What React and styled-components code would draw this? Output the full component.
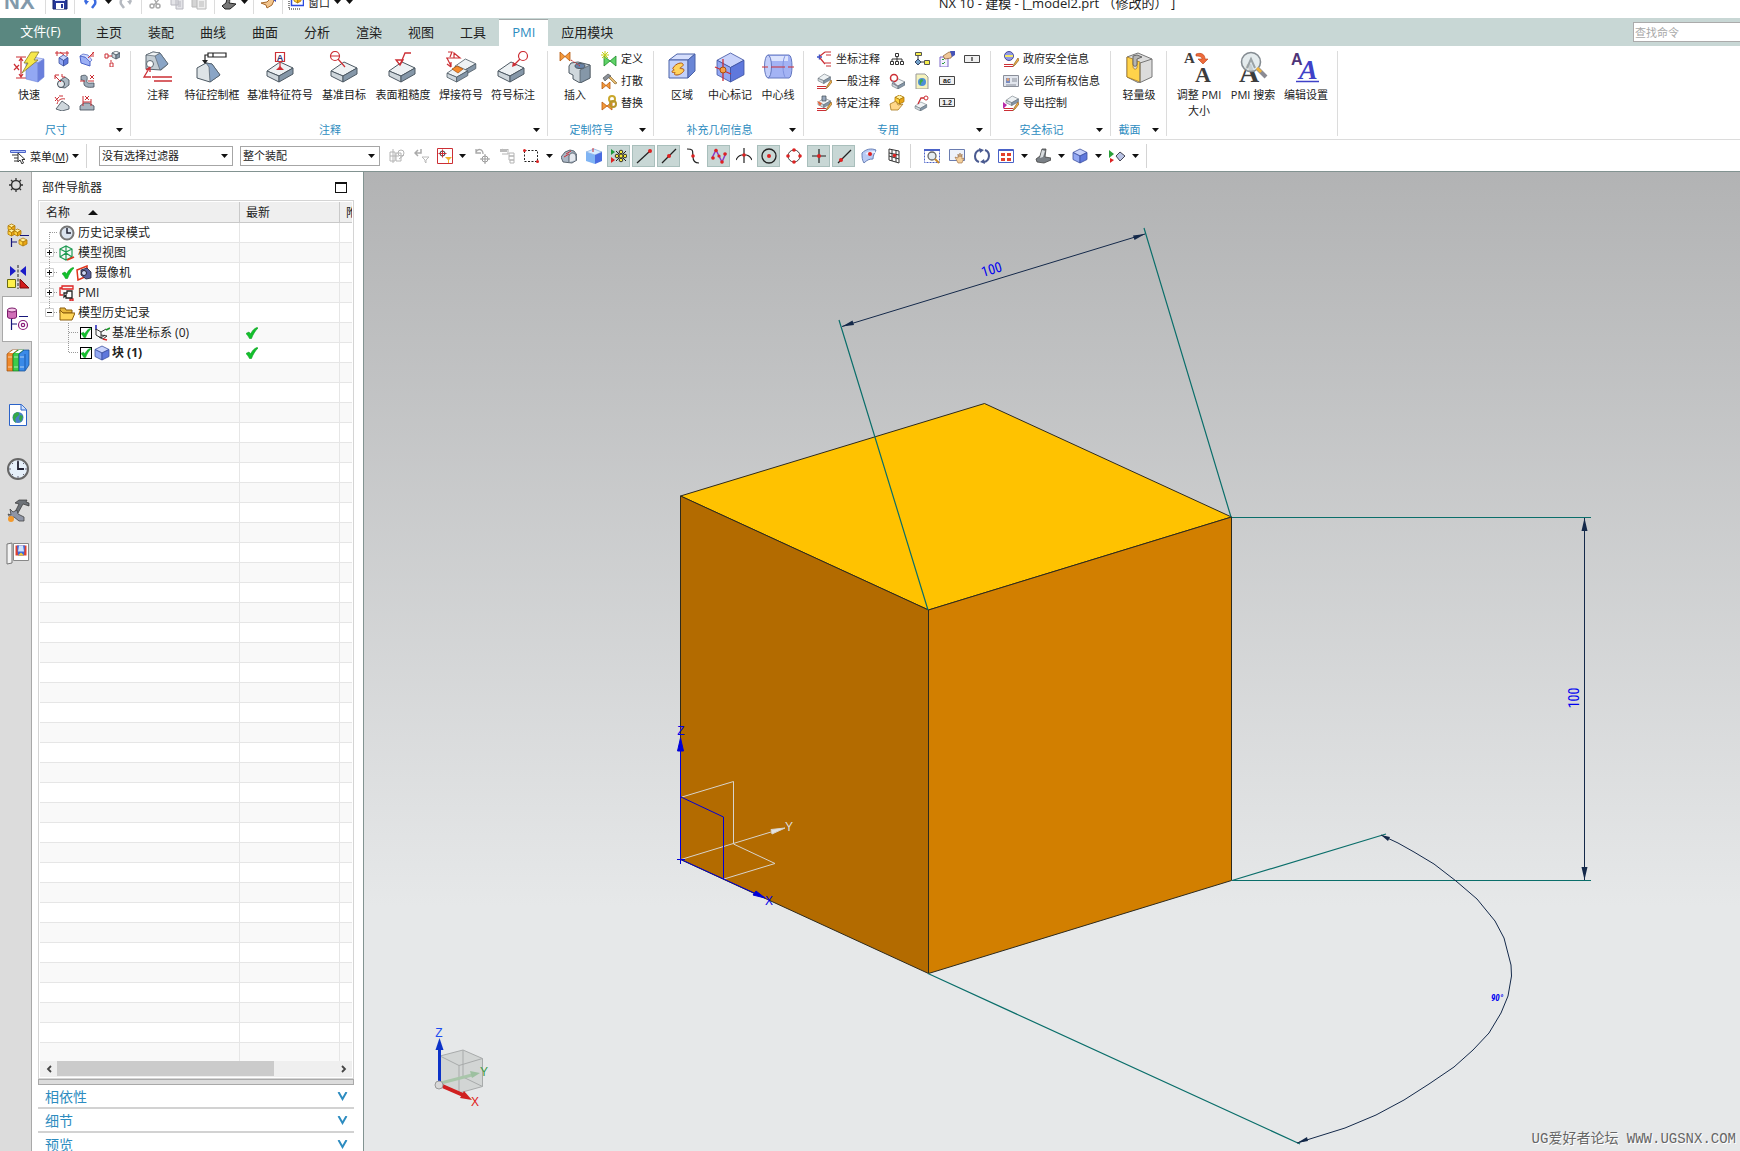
import React, { useState } from "react";
import styled, { createGlobalStyle } from "styled-components";

const GlobalStyle = createGlobalStyle`
  * {
    box-sizing: border-box;
  }
  body {
    margin: 0;
    overflow: hidden;
    background: #fff;
    color: #222;
    font-family: "Open Sans", "Noto Sans CJK SC", sans-serif;
    font-size: 11px;
  }
  button, select, input {
    font: inherit;
    color: inherit;
    margin: 0;
  }
  button {
    border: none;
    padding: 0;
    background: none;
    cursor: pointer;
  }
  svg {
    display: block;
    flex: none;
  }
`;

const Page = styled.div`
  display: flex;
  flex-direction: column;
  height: 100vh;
`;

/* ---------- title bar ---------- */

const TitleBar = styled.header`
  display: flex;
  align-items: flex-end;
  height: 18px;
  overflow: hidden;
`;

const QuickAccess = styled.div`
  display: flex;
  align-items: center;
  flex: none;
  width: 374px;
  height: 32px;
`;

const Logo = styled.b`
  width: 41px;
  padding-left: 4px;
  color: #8299ab;
  font: bold 22px "Liberation Sans", sans-serif;
`;

const QuickButton = styled.button`
  display: flex;
  align-items: center;
  justify-content: center;
  gap: 4px;
  width: ${(p) => p.$w || 22}px;
  height: 24px;
  white-space: nowrap;
`;

const QuickSep = styled.span`
  width: 1px;
  height: 24px;
  margin: 0 4px;
  background: #dcdcdc;
`;

const WindowTitle = styled.h1`
  flex: 1;
  margin: 0;
  text-align: center;
  font-size: 13px;
  font-weight: 400;
  line-height: 30px;
  white-space: pre;
`;

/* ---------- tabs ---------- */

const TabBar = styled.nav`
  display: flex;
  flex: none;
  height: 28px;
  background: #c8d7d5;
  font-size: 13px;
`;

const FileTab = styled.button`
  width: 81px;
  margin-right: 2px;
  padding-bottom: 3px;
  background: #5a8780;
  color: #fff;
`;

const Tab = styled.button`
  padding: 0 13px 3px;
  margin-top: 1px;
  border-top: 1px solid ${(p) => (p.$on ? "#a3a9a9" : "transparent")};
  background: ${(p) => (p.$on ? "#fff" : "transparent")};
  color: ${(p) => (p.$on ? "#2d8cc0" : "#222")};
`;

const Search = styled.input`
  width: 107px;
  height: 20px;
  margin: 4px 0 0 auto;
  padding: 0 1px;
  border: 1px solid #ababab;
  border-right: none;
  border-radius: 0;
  background: #fff;
  font-size: 11px;
  &::placeholder {
    color: #a8a8a8;
  }
`;

/* ---------- ribbon ---------- */

const Ribbon = styled.div`
  display: grid;
  flex: none;
  grid-template-columns: 131px 417px 106px 150px 187px 120px 56px 171px;
  height: 94px;
  padding: 5px 0 3px;
  border-bottom: 1px solid #dcdcdc;
`;

const GroupBox = styled.section`
  display: flex;
  flex-direction: column;
  border-right: 1px solid #dcdcdc;
`;

const GroupBody = styled.div`
  display: flex;
  flex: 1;
  align-items: flex-start;
  padding-left: ${(p) => p.$pad}px;
`;

const GroupFoot = styled.div`
  display: flex;
  height: 12px;
  line-height: 12px;
  color: #2d8cc0;
`;

const GroupName = styled.span`
  flex: 1;
  text-align: center;
`;

const GroupMore = styled.button`
  width: 18px;
  padding-left: 4px;
`;

const BigButton = styled.button`
  display: flex;
  flex-direction: column;
  align-items: center;
  gap: 4px;
  width: ${(p) => p.$w}px;
  line-height: 16px;
  white-space: nowrap;
`;

const IconGrid = styled.div`
  display: grid;
  grid-template-rows: repeat(3, 16px);
  grid-auto-flow: column;
  grid-auto-columns: 25px;
  row-gap: 6px;
  margin-left: ${(p) => p.$gap || 0}px;
`;

const TextGrid = styled(IconGrid)`
  grid-auto-columns: auto;
`;

const IconButton = styled.button`
  display: flex;
  align-items: center;
  justify-content: center;
`;

const TextButton = styled.button`
  display: flex;
  align-items: center;
  gap: 4px;
  line-height: 16px;
  white-space: nowrap;
`;

/* ---------- selection bar ---------- */

const SelectionBar = styled.div`
  display: flex;
  flex: none;
  align-items: center;
  height: 32px;
  border-bottom: 1px solid #829391;
`;

const MenuButton = styled.button`
  display: flex;
  align-items: center;
  gap: 4px;
  width: 86px;
  padding-left: 10px;
  white-space: nowrap;
`;

const BarSep = styled.span`
  width: 1px;
  height: 24px;
  margin-right: ${(p) => p.$after}px;
  margin-left: ${(p) => p.$before || 0}px;
  background: #d4d4d4;
`;

const SelectWrap = styled.label`
  display: grid;
  align-items: center;
  width: ${(p) => p.$w}px;
  margin-right: ${(p) => p.$gap}px;
  select,
  svg {
    grid-area: 1 / 1;
  }
  select {
    appearance: none;
    height: 20px;
    padding: 0 2px;
    border: 1px solid #a6a6a6;
    border-radius: 0;
    background: #fff;
  }
  svg {
    justify-self: end;
    margin-right: 5px;
    pointer-events: none;
  }
`;

const Tool = styled.button`
  display: flex;
  align-items: center;
  justify-content: center;
  width: ${(p) => (p.$on ? 23 : p.$w || 25)}px;
  height: 22px;
  margin: 0 ${(p) => (p.$on ? 1 : 0)}px;
  border: ${(p) => (p.$on ? "1px solid #a9bfbc" : "none")};
  background: ${(p) => (p.$on ? "#c8d7d5" : "none")};
`;

/* ---------- body ---------- */

const Body = styled.main`
  display: flex;
  flex: 1;
  min-height: 0;
`;

const Rail = styled.nav`
  display: flex;
  flex: none;
  flex-direction: column;
  width: 32px;
  border-right: 1px solid #a9a9a9;
  background: #dcdcdc;
`;

const RailButton = styled.button`
  display: flex;
  align-items: center;
  justify-content: center;
  height: 42px;
  margin-top: ${(p) => p.$gap || 0}px;
  padding-left: 4px;
`;

const RailOptions = styled(RailButton)`
  height: 26px;
  padding-left: 0;
`;

const RailActive = styled(RailButton)`
  width: 30px;
  height: 46px;
  margin: -2px -1px -2px 2px;
  padding-left: 1px;
  border: 1px solid #a9a9a9;
  border-right: none;
  background: #fff;
`;

const Panel = styled.aside`
  display: flex;
  flex: none;
  flex-direction: column;
  width: 332px;
  padding: 0 9px 0 6px;
  border-right: 1px solid #829391;
`;

const PanelHead = styled.div`
  display: flex;
  align-items: center;
  justify-content: space-between;
  height: 28px;
  padding: 2px 7px 0 4px;
`;

const PanelTitle = styled.h2`
  margin: 0;
  font-size: 12px;
  font-weight: 400;
`;

const MaxButton = styled.button`
  width: 12px;
  height: 11px;
  border: 1px solid #111;
  border-top-width: 2px;
`;

const TreeBox = styled.div`
  display: flex;
  flex: 1;
  flex-direction: column;
  min-height: 0;
  padding: 1px;
  border: 1px solid #d4d4d4;
`;

const TreeScroll = styled.div`
  flex: 1;
  min-height: 0;
  overflow: hidden;
`;

const TreeTable = styled.table`
  width: 100%;
  table-layout: fixed;
  border-collapse: separate;
  border-spacing: 0;
  font-size: 12px;
  th,
  td {
    overflow: hidden;
    padding: 0;
    white-space: nowrap;
    border-right: 1px solid #e6e6e6;
  }
  th {
    height: 21px;
    padding: 0 6px;
    border-bottom: 1px solid #c9c9c9;
    border-right-color: #c9c9c9;
    background: #efefef;
    font-weight: 400;
    text-align: left;
  }
  td {
    height: 20px;
    border-bottom: 1px solid #e6e6e6;
  }
  tr > :last-child {
    border-right: none;
    text-overflow: clip;
  }
  tbody tr:nth-child(even) {
    background: #f9f9f9;
  }
`;

const SortHead = styled.span`
  display: flex;
  align-items: center;
  gap: 18px;
`;

const Node = styled.div`
  display: flex;
  align-items: center;
  height: 19px;
  padding-left: ${(p) => (p.$level ? 22 : 3)}px;
  font-weight: ${(p) => (p.$bold ? 700 : 400)};
  line-height: 18px;
`;

const NodeText = styled.span`
  padding-left: 3px;
`;

const Ticked = styled.span`
  padding: 0 2px 0 3px;
`;

const NodeLabel = styled.label`
  display: flex;
  align-items: center;
  gap: 2px;
`;

const CheckBox = styled.span`
  display: grid;
  place-items: center;
  input,
  svg {
    grid-area: 1 / 1;
  }
  input {
    appearance: none;
    width: 12px;
    height: 12px;
    border: 1px solid #000;
    background: #fff;
  }
  svg {
    pointer-events: none;
  }
`;

const StateCell = styled.td`
  svg {
    margin-left: 6px;
  }
`;

const ScrollBar = styled.div`
  display: flex;
  height: 16px;
  background: #efefef;
`;

const ScrollArrow = styled.button`
  display: flex;
  align-items: center;
  justify-content: center;
  width: 17px;
`;

const ScrollTrack = styled.div`
  flex: 1;
`;

const ScrollThumb = styled.div`
  width: 78%;
  height: 15px;
  background: #cbcbcb;
`;

const Splitter = styled.div`
  height: 6px;
  border: 1px solid #a9a9a9;
  background: #dcdcdc;
`;

const Sections = styled.div`
  height: 66px;
  overflow: hidden;
`;

const Section = styled.button`
  display: flex;
  align-items: center;
  justify-content: space-between;
  width: 100%;
  height: 24px;
  padding: 1px 6px 0 7px;
  border-bottom: 2px solid #d2d2d2;
  color: #2d8cc0;
  font-size: 14px;
  line-height: 20px;
`;

const Viewport = styled.section`
  position: relative;
  flex: 1;
  min-width: 0;
  background: linear-gradient(#b2b3b4, #e6e8e9 75%);
  > svg {
    width: 100%;
    height: 100%;
  }
`;

const Watermark = styled.span`
  position: absolute;
  right: 4px;
  bottom: 3px;
  color: #666;
  font: 14px/18px "Liberation Mono", "Noto Sans CJK SC", monospace;
  text-shadow: 1px 1px 0 #fff;
`;

/* ---------- drawing helpers ---------- */

const RED = "#cc2f35";
const INK = "#3f4a55";

const Svg = ({ s = 16, children }) => (
  <svg width={s} height={s} viewBox={`0 0 ${s} ${s}`} fill="none" aria-hidden="true">
    {children}
  </svg>
);

const Caret = () => (
  <svg width="7" height="4" viewBox="0 0 7 4" aria-hidden="true">
    <path d="M0 0h7L3.5 4z" fill="#111" />
  </svg>
);

const palettes = {
  grey: ["#eef2f4", "#cfd7dc", "#8597a8", "#4d5963"],
  blue: ["#c9d3fb", "#93a8f3", "#5f78dc", "#3c50a0"],
  gold: ["#fff0a0", "#ffd23c", "#e8a414", "#b07a08"],
};

const Cube = ({ x = 0, y = 0, w = 14, h = 15, c = "grey" }) => {
  const [top, left, right, line] = palettes[c];
  const m = x + w / 2;
  const d = h / 4;
  return (
    <g stroke={line} strokeWidth=".8" strokeLinejoin="round">
      <path d={`M${x} ${y + d}L${m} ${y}L${x + w} ${y + d}L${m} ${y + 2 * d}z`} fill={top} />
      <path d={`M${x} ${y + d}L${m} ${y + 2 * d}V${y + h}L${x} ${y + h - d}z`} fill={left} />
      <path d={`M${m} ${y + 2 * d}L${x + w} ${y + d}V${y + h - d}L${m} ${y + h}z`} fill={right} />
    </g>
  );
};

const Slab = ({ x = 0, y = 0, k = 1, c = "grey" }) => {
  const [top, left, right, line] = palettes[c];
  return (
    <g transform={`translate(${x} ${y}) scale(${k})`} stroke={line} strokeLinejoin="round">
      <path d="M0 9L13 0L26 6L12 14z" fill={top} />
      <path d="M0 9L12 14V20L0 14z" fill={left} />
      <path d="M12 14L26 6V12L12 20z" fill={right} />
    </g>
  );
};

const Pencil = () => (
  <g>
    <path d="M1 13.5h9M1 15.5h9" stroke={RED} />
    <path d="M15 7l-4 6-1 2.500 2-1.500 4-5z" fill="#f4b64a" stroke="#8a5a1c" strokeWidth=".7" />
  </g>
);

const Bowtie = ({ x = 0, y = 0, w = 10, h = 9, c = "#f59a3a", s = "#b55a12" }) => (
  <path
    d={`M${x} ${y}L${x + w} ${y + h}V${y}L${x} ${y + h}z`}
    fill={c}
    stroke={s}
    strokeWidth=".8"
    strokeLinejoin="round"
  />
);

const Check = ({ s = 12 }) => (
  <svg width={s} height={s} viewBox="0 0 12 12" aria-hidden="true">
    <path d="M0 6.500L3 5l1.500 2C6 4 8 1.500 11 .5L12 1C9 4 7 7.500 5.500 11.500H3.500C2.500 9.500 1.500 8 0 6.500z" fill="#12c22c" stroke="#0a9a1e" strokeWidth=".6" />
  </svg>
);

/* ---------- ribbon icons ---------- */

const icons = {
  quick: (
    <Svg s={32}>
      <path d="M3 6h10M3 27h10M8 7v19M6 10l2-3 2 3M6 23l2 3 2-3M1 13l5 6M1 19l5-5" stroke={RED} strokeWidth="1.200" />
      <path d="M13 10l7-4 11 2-6 4z" fill="#cdd7fb" stroke="#6f84d8" strokeWidth=".6" />
      <path d="M13 10l12 2v19l-12-3z" fill="#93a8f3" stroke="#6f84d8" strokeWidth=".6" />
      <path d="M25 12l6-4v18l-6 5z" fill="#6a7fdc" stroke="#6f84d8" strokeWidth=".6" />
      <path d="M18 1h8l-5 8h4L9 22l6-10h-4z" fill="#f6e84a" stroke="#8a7c2c" strokeWidth=".8" />
    </Svg>
  ),
  note: (
    <Svg s={32}>
      <path d="M4 4l7-3 7 1 8 11-7 6-15-1z" fill="#c5ced4" stroke="#5a6670" />
      <path d="M13 5l5-3 8 11-8 6z" fill="#8aa5c6" stroke="#5a6670" strokeWidth=".7" />
      <path d="M4 4l7-3 7 1-5 3z" fill="#eef2f4" stroke="#5a6670" strokeWidth=".7" />
      <circle cx="8" cy="13" r="3.500" fill="#fff" stroke="#5a6670" />
      <path d="M8 16L2 26h7M8 16l-4 3M8 16v5M10 26h20M12 30h18" stroke={RED} strokeWidth="1.300" />
    </Svg>
  ),
  frame: (
    <Svg s={32}>
      <path d="M1 17l9-5 6 1 8 11-10 7-13-4z" fill="#dde3e6" stroke="#4d5963" />
      <path d="M10 12l6 1 8 11-10 7-1-15z" fill="#8aa5c6" stroke="#4d5963" strokeWidth=".7" />
      <path d="M9 12V4h3M12 2h18v4H12zM17 2v4" stroke="#222" strokeWidth="1.200" />
      <path d="M6 9h6l-3 4z" fill="#222" />
    </Svg>
  ),
  datum: (
    <Svg s={32}>
      <Slab x={3} y={11} />
      <path d="M11.500 1.500h9v9h-9zM16 11v5" stroke={RED} strokeWidth="1.200" fill="#fff" />
      <path d="M12 19l4-4 4 4z" fill={RED} />
      <text x="16" y="9.500" fontSize="9" fontWeight="700" textAnchor="middle" fill="#34346e" fontFamily="Liberation Sans">A</text>
    </Svg>
  ),
  target: (
    <Svg s={32}>
      <Slab x={3} y={11} />
      <circle cx="7" cy="5" r="4.500" stroke={RED} strokeWidth="1.200" fill="#fff" />
      <path d="M2.500 5h9M10 8l7 8" stroke={RED} strokeWidth="1.200" />
    </Svg>
  ),
  rough: (
    <Svg s={32}>
      <Slab x={2} y={11} />
      <path d="M9 9h7l-3 5zM13 14l5-12h6" stroke={RED} strokeWidth="1.300" />
    </Svg>
  ),
  weld: (
    <Svg s={32}>
      <Slab x={10} y={8} k={0.8} />
      <Slab x={2} y={15} k={0.8} />
      <path d="M7 18l5-3 6 3-5 4z" fill="#f58a2c" stroke="#a8520c" strokeWidth=".7" />
      <path d="M1 7h14L9 2v5M3 1h4L5 6M2 7l4 8M6 16v-5M6 16l-4-3" stroke={RED} strokeWidth="1.200" />
    </Svg>
  ),
  balloon: (
    <Svg s={32}>
      <Slab x={1} y={11} />
      <circle cx="26" cy="5" r="4.500" stroke={RED} strokeWidth="1.200" />
      <path d="M23 8l-6 6" stroke={RED} strokeWidth="1.200" />
      <path d="M15 16l1-5 4 3z" fill={RED} />
    </Svg>
  ),
  insert: (
    <Svg s={32}>
      <Bowtie x={1} y={1} />
      <path d="M12 12l-2 3v7l4 2v4l7 4 10-5V14l-12-3z" fill="#cfd7dc" stroke="#4d5963" />
      <path d="M21 19l10-5v13l-10 5z" fill="#8597a8" stroke="#4d5963" strokeWidth=".7" />
      <ellipse cx="21" cy="15" rx="5" ry="2.500" fill="#6883a8" stroke="#4d5963" />
      <path d="M12 9l9 6" stroke={RED} strokeDasharray="2 1" />
    </Svg>
  ),
  region: (
    <Svg s={32}>
      <path d="M3 9l8-6h18l-7 6z" fill="#d5defc" stroke="#4a62a8" />
      <path d="M3 9h19v18H3z" fill="#c3d1fa" stroke="#4a62a8" />
      <path d="M22 9l7-6v17l-7 7z" fill="#6a86d6" stroke="#4a62a8" />
      <path d="M7 17c3-5 9-6 10-4s-2 3-3 4 4 0 4 2-4 5-7 5-3-1-2-2-3 0-3-1 1-2 2-2-2-1-1-2z" fill="#ffd35c" stroke="#b0560f" />
    </Svg>
  ),
  centermark: (
    <Svg s={32}>
      <Cube x={3} y={2} w={27} h={29} c="blue" />
      <path d="M9 8v22M1 16l16 7" stroke={RED} strokeWidth="1.300" />
      <circle cx="9" cy="19" r="3" fill="#f5a04a" stroke="#a8520c" />
    </Svg>
  ),
  centerline: (
    <Svg s={32}>
      <path d="M6 4h21c4 0 4 23 0 23H6z" fill="#a3b3f4" stroke="#6478c0" />
      <path d="M8 5h18v5H8z" fill="#dbe3fd" />
      <ellipse cx="6" cy="15.500" rx="3.500" ry="11.500" fill="#c3cefa" stroke="#6478c0" />
      <path d="M24 4c-4 2-4 21 0 23" stroke="#7f92e0" />
      <path d="M0 16h6M9 16h14M26 16h6" stroke={RED} strokeWidth="1.200" />
    </Svg>
  ),
  light: (
    <Svg s={32}>
      <path d="M4 6l11-4 14 6v18l-13 6-12-6z" fill="#dcdcdc" stroke="#777" />
      <path d="M4 6l6 2v7c0 4 4 4 4 1v-6l3 1v20L4 26z" fill="#ffd34a" stroke="#a8791c" strokeWidth=".8" />
      <path d="M10 5v8c0 3 4 3 4 0V8l5-2-5-2z" fill="#b5b5b5" stroke="#666" />
      <path d="M17 12l12-4M17 12v20" stroke="#777" />
    </Svg>
  ),
  resize: (
    <Svg s={32}>
      <g fontFamily="Liberation Serif" fontWeight="700" fill="#3c3c3c">
        <text x="1" y="12" fontSize="15">A</text>
        <text x="12" y="31" fontSize="22">A</text>
      </g>
      <path d="M13 3c6-2 9 1 9 5h3l-5 5-5-5h4c0-2-2-3-6-3z" fill="#ee6b3a" stroke="#b8401a" strokeWidth=".6" />
    </Svg>
  ),
  search: (
    <Svg s={32}>
      <text x="2" y="31" fontSize="28" fontWeight="700" fill="#3c3c3c" fontFamily="Liberation Serif">A</text>
      <circle cx="14" cy="11" r="9.500" fill="#dfe7ea" fillOpacity=".85" stroke="#858c92" strokeWidth="1.600" />
      <path d="M10 17l4-9 4 9" stroke="#9aa2a6" strokeWidth="2" />
      <path d="M21 18l8 8" stroke="#8b8b93" strokeWidth="4" />
      <path d="M20 17l4 4" stroke="#f0b43c" strokeWidth="3" />
    </Svg>
  ),
  settings: (
    <Svg s={32}>
      <text x="1" y="14" fontSize="16" fontWeight="700" fill="#4e3478" fontFamily="Liberation Sans">A</text>
      <text x="9" y="28" fontSize="28" fontWeight="700" fontStyle="italic" fill="#3f42c8" fontFamily="Liberation Serif">A</text>
      <path d="M6 30.500h23" stroke="#3f42c8" strokeWidth="1.500" />
    </Svg>
  ),

  // 16px ribbon icons
  dimLinear: <Svg><Cube x={5} y={4} w={9} h={11} c="blue" /><path d="M1 2h14M3 0v5M13 0v5M6 1l4 3" stroke={RED} /></Svg>,
  dimRadial: <Svg><path d="M5 8l6-4 4 3v5l-4 3-6-1z" fill="#aebac4" stroke={INK} strokeWidth=".8" /><circle cx="7" cy="11" r="3.500" fill="#e5eaed" stroke={INK} /><path d="M1 3l6 6M1 6V2h4M8 1v3h3" stroke={RED} /></Svg>,
  dimAngle: <Svg><path d="M2 14l6-8 7 5v3l-7 2z" fill="#cfd7dc" stroke={INK} strokeWidth=".8" /><path d="M1 2l3 4M1 6l4-4M5 1h4M3 9c1-4 4-6 8-5" stroke={RED} /></Svg>,
  dimChamfer: <Svg><path d="M1 5l5 1 5 5v4l-9-3z" fill="#9cb0f5" stroke="#4a62c8" /><path d="M1 5l3-2 5 1 4 5-2 2-5-5z" fill="#d0dafc" stroke="#4a62c8" strokeWidth=".7" /><path d="M9 7l6-6M11 5h4M14 1v3" stroke={RED} /></Svg>,
  dimThick: <Svg><path d="M2 3c5-2 7 0 6 4s2 3 7 3v4c-6 1-11 0-10-5 0-2-1-2-3-2z" fill="#9fadba" stroke={INK} strokeWidth=".8" /><path d="M1 8h5M9 8h6M11 2l4 4M15 2l-4 4" stroke={RED} /></Svg>,
  dimArc: <Svg><path d="M1 11l4-3h5l5 3v4H1z" fill="#a9b5bf" stroke={INK} strokeWidth=".8" /><path d="M4 1v10M12 4v7M4 7h8M6 1l4 4M10 1L6 5" stroke={RED} /></Svg>,
  dimOrd: <Svg><Cube x={8} y={0} w={8} h={8} /><path d="M1 3h3v4H1zM4 5h4M7 9v2M6 12h3v4H6z" stroke={RED} /></Svg>,
  define: <Svg><Bowtie x={3} y={5} w={12} h={10} c="#5fd267" s="#1c8a28" /><path d="M4 0v8M0 4h8M1 1l6 6M7 1L1 7" stroke="#c3cf1a" /></Svg>,
  explode: <Svg><Bowtie x={1} y={9} w={8} h={7} /><path d="M7 4l2-1 7 7-2 1z" fill="#e6bb72" stroke="#8a6a2c" strokeWidth=".7" /><path d="M2 5l5-4 3 2-4 3-2 2z" fill="#8a9098" stroke="#555" strokeWidth=".7" /></Svg>,
  replace: <Svg><Bowtie x={1} y={7} w={10} h={8} /><circle cx="11" cy="4" r="3" stroke="#c9a72c" strokeWidth="2" /><circle cx="12" cy="9" r="3" stroke="#b8952a" strokeWidth="2" /></Svg>,
  coordNote: <Svg><path d="M1 6h5M3.500 3.500v5" stroke="#3a50c8" strokeWidth="1.500" /><path d="M4 5l5-4M4 7l5 6M9 1h6M10 4h5M9 12h6M10 15h5" stroke={RED} strokeWidth="1.200" /></Svg>,
  generalNote: <Svg><Slab x={2} y={1} k={0.48} /><Pencil /></Svg>,
  specificNote: <Svg><Slab x={2} y={3} k={0.48} /><path d="M6 1h4v5H6z" fill="#9aa9bd" stroke={INK} strokeWidth=".7" /><path d="M1 6l5 2-2 3z" fill="#e9663a" /><Pencil /></Svg>,
  treeSmall: <Svg><path d="M6.500 2.500h3v3h-3zM1.500 10.500h3v3h-3zM6.500 10.500h3v3h-3zM11.500 10.500h3v3h-3zM8 6v4M3 10V8h10v2" stroke="#333" /></Svg>,
  dummy1: <Svg><Slab x={3} y={6} k={0.5} /><circle cx="5" cy="5" r="3.500" stroke={RED} strokeWidth="1.500" /><path d="M3 8l5 5" stroke="#889" strokeWidth="1.500" /></Svg>,
  goldBox: <Svg><Cube x={6} y={0} w={9} h={9} c="gold" /><path d="M1 9l6-3 2 4 5-1-5 6H2z" fill="#ffd78a" stroke="#a8791c" strokeWidth=".8" /></Svg>,
  flow: <Svg><path d="M4 5v6M4 11h6" stroke="#333" /><path d="M1.500 1.500h6v3h-6z" fill="#f6ee4a" stroke="#555" /><path d="M4 8l3 3-3 3-3-3z" fill="#72a0c8" stroke="#346" /><path d="M10.500 9.500h5v4h-5z" fill="#f6ee4a" stroke="#555" /></Svg>,
  pageGlobe: <Svg><path d="M2 1h9l3 3v12H2z" fill="#f4f2bd" stroke="#999" /><circle cx="8" cy="9" r="4" fill="#4e8ed8" /><path d="M6 7c3-3 4 1 2 2s0 3-1 3-2-3-1-5z" fill="#3faa4a" /></Svg>,
  slabNote: <Svg><Slab x={1} y={7} k={0.45} /><circle cx="12" cy="3" r="2" stroke={RED} /><path d="M10 3H7L4 9" stroke={RED} strokeWidth="1.300" /></Svg>,
  handList: <Svg><path d="M1 6h8v10H1z" fill="#f4f0ff" stroke="#7c68c8" /><path d="M3 8l1 1 2-2M3 12l1 1 2-2" stroke="#2a9a3a" /><path d="M4 5l6-4 4 1-2 5-6 1z" fill="#f0c899" stroke="#8a5a2c" strokeWidth=".7" /><path d="M11 0h5v4l-3 2z" fill="#4654b8" /></Svg>,
  box1: <Svg><path d="M.5 4.500h15v7H.5z" fill="#f0f0f0" stroke="#444" /><path d="M8 6v4" stroke="#333" strokeWidth="1.300" /></Svg>,
  boxAc: <Svg><path d="M.5 3.500h15v8H.5z" fill="#f0f0f0" stroke="#444" /><text x="8" y="10" fontSize="7" fontWeight="700" textAnchor="middle" fill="#222" fontFamily="Liberation Sans">ac</text></Svg>,
  box12: <Svg><path d="M.5 3.500h15v8H.5z" fill="#f0f0f0" stroke="#444" /><text x="8" y="10" fontSize="7" fontWeight="700" textAnchor="middle" fill="#222" fontFamily="Liberation Sans">1.2</text></Svg>,
  gov: <Svg><circle cx="6" cy="5" r="4.500" fill="#8e97e8" stroke="#4a4f9a" /><path d="M2 4h8v2H2z" fill="#f3e76a" /><Pencil /></Svg>,
  owner: <Svg><path d="M.5 2.500h15v11H.5z" fill="#e2e6ee" stroke="#8a8f9a" /><path d="M3 5h4v5H3z" fill="#7a8cc0" /><circle cx="5" cy="6.500" r="1.500" fill="#e0a070" /><path d="M9 6h5M9 8h5M3 12h10" stroke="#8a8f9a" /></Svg>,
  exportCtl: <Svg><Slab x={3} y={1} k={0.48} /><path d="M0 7l4 3-4 4z" fill="#b82aa8" /><Pencil /></Svg>,
};

/* ---------- toolbar icons ---------- */

const bar = {
  menu: <Svg><path d="M.5 2.500h15v2H.5z" fill="#b8c8f8" stroke="#4a62c8" /><path d="M2 7h8M4 10h6M4 13h5" stroke="#777" strokeWidth="1.500" /><path d="M8 5v9l2-2 2 4 1.500-1L12 11.500h3z" fill="#fff" stroke="#333" /></Svg>,
  g1: <Svg><path d="M1 4h5v9H1zM4 1v14M1 8h9M7 5h5v8H7z" stroke="#b4b4b4" /><circle cx="12" cy="5" r="3" stroke="#b4b4b4" /><path d="M10 11l5-4" stroke="#b4b4b4" /></Svg>,
  g2: <Svg><path d="M7 1v4H2M4 2L1 5l3 3" stroke="#aaa" strokeWidth="1.500" /><path d="M8 9h7l-3 3v3l-1-1v-2z" stroke="#bbb" /></Svg>,
  filter: <Svg><path d="M.5 .5h15v15H.5z" stroke={RED} /><circle cx="5.500" cy="5.500" r="2.500" stroke="#333" /><path d="M5.500 1.500v8M1.500 5.500h8" stroke={RED} /><path d="M8 9h7l-3 3v3h-1v-3z" fill="#f0b42c" /></Svg>,
  g3: <Svg><path d="M2 1v4h5M2 4c2-4 7-3 7 2" stroke="#a8a8a8" strokeWidth="1.300" /><circle cx="11" cy="11" r="3" stroke="#999" /><path d="M11 6v10M6 11h10" stroke="#999" /></Svg>,
  g4: <Svg><path d="M1 3l3-2 2 3 3-3v5H3M10 5h5v3h-5zM10 8h5v4h-5zM11 12h4v3h-4z" stroke="#b4b4b4" /><path d="M1 1h7v3H1z" fill="#bbb" /></Svg>,
  rect: <Svg><path d="M1.500 2.500h13v11h-13z" stroke="#222" strokeDasharray="2 1.500" /><circle cx="1.500" cy="2.500" r="1.500" fill="#d22" /><circle cx="14.500" cy="13.500" r="1.500" fill="#d22" /></Svg>,
  body1: <Svg><path d="M0 9l4-5 5-2 4 1 3 4v5l-5 3-9-1z" fill="#aab6c4" stroke={INK} strokeWidth=".8" /><path d="M8 14V8c1-4 6-4 7 0v4" fill="#e4e8ee" stroke={INK} strokeWidth=".8" /><path d="M5 6l5-3M3 9l5-3" stroke={RED} /></Svg>,
  cubeBlue: <Svg><path d="M0 4l8-3 8 3-7 3z" fill="#d8ecff" stroke="#7fa8dc" strokeWidth=".7" /><path d="M0 4l9 3v9l-9-3z" fill="#7fb4f4" /><path d="M9 7l7-3v9l-7 3z" fill="#4a6ce0" /><path d="M7 0v4" stroke={RED} /></Svg>,
  snap: <Svg><path d="M0 1l4 3-4 3z" fill="#1c9a3a" /><path d="M0 9l4 3-4 3z" fill="#d22" /><g fill="#f6e83a" stroke="#222" strokeWidth=".9"><circle cx="10" cy="4" r="1.800" /><circle cx="10" cy="12" r="1.800" /><circle cx="6" cy="8" r="1.800" /><circle cx="14" cy="8" r="1.800" /><circle cx="10" cy="8" r="2" /></g><path d="M5 3l3 3M15 3l-3 3M5 13l3-3M15 13l-3-3" stroke="#222" /></Svg>,
  endLine: <Svg><path d="M1 15L14 3" stroke="#222" strokeWidth="1.200" /><circle cx="14" cy="3" r="2" fill="#d22" /></Svg>,
  midLine: <Svg><path d="M1 15L15 1" stroke="#222" strokeWidth="1.200" /><circle cx="8" cy="8" r="2" fill="#d22" /></Svg>,
  curve: <Svg><path d="M1 1c8 0 5 3 6 8 0 4 2 6 6 6" stroke="#222" strokeWidth="1.200" /><circle cx="7" cy="8" r="1.800" fill="#d22" /></Svg>,
  spline: <Svg><path d="M1 10L5 2l3 6 3 6 4-9" stroke="#8a3cc8" strokeWidth="1.500" /><g fill="#d22"><circle cx="2" cy="10" r="1.800" /><circle cx="5" cy="2.500" r="1.800" /><circle cx="8" cy="8" r="1.600" /><circle cx="11" cy="14" r="1.800" /><circle cx="14" cy="6" r="1.800" /></g></Svg>,
  cross: <Svg><path d="M8 0v15M0 12c3-7 13-7 16 0" stroke="#222" strokeWidth="1.200" /><circle cx="8" cy="7" r="1.800" fill="#d22" /></Svg>,
  circleC: <Svg><circle cx="8" cy="8" r="7" stroke="#222" strokeWidth="1.300" /><circle cx="8" cy="8" r="2" fill="#d22" /></Svg>,
  quad: <Svg><circle cx="8" cy="8" r="6" stroke="#444" /><g fill="#d22"><circle cx="8" cy="2" r="1.800" /><circle cx="8" cy="14" r="1.800" /><circle cx="2" cy="8" r="1.800" /><circle cx="14" cy="8" r="1.800" /></g></Svg>,
  plus: <Svg><path d="M8 1v14M1 8h14" stroke="#222" strokeWidth="1.200" /><circle cx="8" cy="8" r="2" fill="#d22" /></Svg>,
  onCurve: <Svg><path d="M2 15L15 2" stroke="#222" strokeWidth="1.200" /><circle cx="5" cy="12" r="2" fill="#d22" /></Svg>,
  surface: <Svg><path d="M1 5c4-4 9-5 14-3-2 4-3 6-3 9-4 0-6 1-9 4-2-3-2-6-2-10z" fill="#b9cbf5" stroke="#6a82b8" /><path d="M5 6c3-2 6-2 9-2" stroke="#eaf0ff" strokeWidth="2" /><circle cx="9" cy="6" r="2" fill="#d22" /></Svg>,
  grid: <Svg><path d="M3 1l10 2v12L3 12zM6 2v11M10 2v12M3 5l10 2M3 8l10 3" stroke="#333" /><circle cx="8.500" cy="7.500" r="1.800" fill="#d22" /></Svg>,
  zoomFit: <Svg><path d="M.5 1.500h15v13H.5z" stroke="#4a62c8" strokeDasharray="2 1" /><path d="M0 1h16v2H0z" fill="#4a62c8" /><circle cx="8" cy="8" r="4" fill="#e4ecf0" stroke="#666" strokeWidth="1.300" /><path d="M11 11l4 4" stroke="#c8882c" strokeWidth="2" /></Svg>,
  pan: <Svg><path d="M.5 1.500h15v11H.5z" fill="#eef2fa" stroke="#6a7cb0" /><path d="M6 9l3 1V6l1 3 1-4 1 4 1-3v5l2-1-2 5H9z" fill="#f3cf9c" stroke="#9a6a3c" strokeWidth=".6" /></Svg>,
  rotate: <Svg><path d="M5 14A6.300 6.300 0 0 1 6 2M11 2a6.300 6.300 0 0 1-1 12" stroke="#4a5a90" strokeWidth="2" /><path d="M5 0l5 2-4 3zM11 16l-5-2 4-3z" fill="#4a5a90" /></Svg>,
  tiles: <Svg><path d="M.5 1.500h15v13H.5z" fill="#fff" stroke="#4a62c8" /><path d="M1 1h14v2H1z" fill="#4a62c8" /><g fill="#e2402c"><path d="M3 5h4v3H3zM9 5h4v3H9zM3 10h4v3H3zM9 10h4v3H9z" /></g></Svg>,
  orient: <Svg><path d="M1 11l4-3 2-7h4l-1 8 6 1v2l-7 3-7-1z" fill="#7a8086" stroke="#444" strokeWidth=".8" /><path d="M7 2l3 1-2 6-3 1z" fill="#d8dcdf" /></Svg>,
  cubeSolid: <Svg><Cube x={1} y={1} w={14} h={14} c="blue" /></Svg>,
  flag: <Svg><path d="M0 2l5 4-5 4z" fill="#2aa03a" /><path d="M1 10l4 2-4 3z" fill="#d22" /><path d="M7 8l4-4 5 4-5 5z" fill="#b9c3e4" stroke="#445" /></Svg>,
};

/* ---------- quick access icons ---------- */

const quick = {
  save: <Svg><path d="M1 1h14v14H1z" fill="#26389a" stroke="#16246a" /><path d="M4 9h8v6H4z" fill="#fff" /><path d="M9 10h2v4H9z" fill="#26389a" /><path d="M3 1h10v6H3z" fill="#dde5ff" /></Svg>,
  undo: <Svg><path d="M2 7h5L4 11z" fill="#3a6ae0" /><path d="M3 7c4-6 12-3 10 3l-3 4" stroke="#3a6ae0" strokeWidth="2.500" /></Svg>,
  redo: <Svg><path d="M14 7H9l3 4z" fill="#b5b9c0" /><path d="M13 7C9 1 1 4 3 10l3 4" stroke="#b5b9c0" strokeWidth="2.500" /></Svg>,
  cut: <Svg><path d="M4 1l5 9M13 3L6 11" stroke="#aaa" strokeWidth="1.300" /><circle cx="4" cy="12" r="2" stroke="#aaa" strokeWidth="1.500" /><circle cx="10" cy="12" r="2" stroke="#aaa" strokeWidth="1.500" /></Svg>,
  copy: <Svg><path d="M2 1h7v10H2zM7 5h7v10H7z" fill="#e4e4e8" stroke="#b8b8c0" /><path d="M9 8h3M9 10h3M9 12h3" stroke="#b8b8c0" /></Svg>,
  paste: <Svg><path d="M1 1h11v12H1z" fill="#d4d4d4" stroke="#b8b8b8" /><path d="M6 5h9v10H6z" fill="#eee" stroke="#b8b8b8" /><path d="M8 8h5M8 10h5M8 12h5" stroke="#b8b8b8" /></Svg>,
  cmd: <Svg><path d="M1 12l4-3 2-8h4l-3 8 7 1-6 5H4z" fill="#777" stroke="#222" /><path d="M9 2l2 1-2 5" stroke="#ddd" /></Svg>,
  touch: <Svg><path d="M1 9l6-1 5-5 3 1-3 7-5 3-1-3z" fill="#f2c48c" stroke="#a86a2c" /><path d="M12 1h4v7l-3-2z" fill="#3a50b8" /></Svg>,
  win: <Svg><path d="M3.500 .5h12v11h-12z" fill="#fff" stroke="#2a4ae0" strokeWidth="1.500" /><Cube x={6} y={1} w={7} h={8} c="gold" /><path d="M1 5v10h11" stroke="#888" strokeDasharray="1 1" strokeWidth="2" /></Svg>,
};

/* ---------- resource bar icons ---------- */

const rail = {
  gear: (
    <Svg s={14}>
      <circle cx="7" cy="7" r="4.500" stroke="#333" strokeWidth="1.500" />
      <path d="M7 0v3M7 11v3M0 7h3M11 7h3M2 2l2 2M10 10l2 2M12 2l-2 2M4 10l-2 2" stroke="#333" strokeWidth="1.300" />
    </Svg>
  ),
  assembly: (
    <Svg s={24}>
      <Cube x={2} y={1} w={7} h={7} c="gold" />
      <Cube x={2} y={6} w={7} h={7} c="gold" />
      <Cube x={8} y={6} w={7} h={7} c="gold" />
      <path d="M14 12.500h9M5.500 15v9M6 19h5" stroke="#16167a" strokeWidth="1.200" />
      <Cube x={13} y={15} w={8} h={8} c="gold" />
    </Svg>
  ),
  mirror: (
    <Svg s={24}>
      <path d="M4 1l6 5-6 5zM20 1l-6 5 6 5z" fill="#1c1cc8" />
      <path d="M12 0v24" stroke="#222" strokeDasharray="3 1.500" />
      <path d="M1.500 14.500h8v8h-8z" fill="#fff04a" stroke="#6a6a10" />
      <path d="M14 14v9h9z" fill="#d21c1c" stroke="#7a0c0c" />
    </Svg>
  ),
  part: (
    <Svg s={24}>
      <path d="M1.500 3v7c0 2 9 2 9 0V3z" fill="#d070b8" stroke="#7a1c6a" />
      <ellipse cx="6" cy="3" rx="4.500" ry="2" fill="#f4c8e8" stroke="#7a1c6a" />
      <path d="M13 9.500h9M5.500 12v11M6 17h5" stroke="#16167a" strokeWidth="1.200" />
      <circle cx="17" cy="18" r="4.500" stroke="#8a1c7a" strokeWidth="1.200" />
      <circle cx="17" cy="18" r="1.700" stroke="#8a1c7a" strokeWidth="1.200" />
    </Svg>
  ),
  books: (
    <Svg s={24}>
      <path d="M1 5l5-4h6L7 5v17H1z" fill="#f08a2c" stroke="#9a4c0c" strokeWidth=".7" />
      <path d="M7 5l5-4h6l-5 4v17H7z" fill="#3ccc4a" stroke="#137a1c" strokeWidth=".7" />
      <path d="M13 5l5-4h5v15l-4 6h-6z" fill="#3a8ae8" stroke="#12488a" strokeWidth=".7" />
      <path d="M3 4l4-3h4L7 4zM9 4l4-3h4l-4 3z" fill="#fff" />
      <path d="M2 8h4M8 8h4M14 8h4M2 18h4M8 18h4M14 18h4" stroke="#fff" strokeOpacity=".6" />
      <path d="M19 5v16" stroke="#1c5cb0" />
    </Svg>
  ),
  page: (
    <Svg s={24}>
      <path d="M3.500 1.500h12l5 5v16h-17z" fill="#fff" stroke="#2a62c8" />
      <path d="M15 1.500v5.500h5.500" fill="#cfe0fb" stroke="#2a62c8" />
      <circle cx="12" cy="14.500" r="5.500" fill="#4a80c8" />
      <path d="M8 11c4-4 7 0 4 2s-3 3-2 7c-3-2-4-6-2-9zM14 12l3 1-2 6-2-3z" fill="#35a848" />
    </Svg>
  ),
  clock: (
    <Svg s={24}>
      <circle cx="12" cy="12" r="10" fill="#e6f0fa" stroke="#666" strokeWidth="2" />
      <path d="M12 4v8h6" stroke="#223" strokeWidth="1.800" />
      <path d="M12 3v2M12 19v2M3 12h2M19 12h2M6 6l1 1M17 17l1 1M18 6l-1 1M6 18l1-1" stroke="#667" />
    </Svg>
  ),
  tools: (
    <Svg s={24}>
      <path d="M9 4l4-3h8l-1 2 3 1v3l-6-2-5 9-3-1 4-8z" fill="#6d7278" stroke="#333" strokeWidth=".7" />
      <path d="M4 10l3 3 4-2 1 4 6 3v4h-5l-5-4-4 1-2-4 3 1z" fill="#8f95a6" stroke="#444" strokeWidth=".8" />
      <circle cx="5" cy="20" r="3" fill="#f59a2c" />
    </Svg>
  ),
  roles: (
    <Svg s={24}>
      <path d="M1 3l5-1v20l-5 1z" fill="#f4f4f4" stroke="#777" />
      <path d="M7.500 2.500h15v17h-15z" fill="#fff" stroke="#888" />
      <path d="M9.500 4.500h11v10h-11z" fill="#e2402c" />
      <path d="M11 4.500h8l-1 10h-6z" fill="#3a6ae0" />
      <path d="M13 4.500h4l1 6h-6z" fill="#cfe4ff" />
      <path d="M12 14.500l3-3 3 3z" fill="#f6c82c" />
    </Svg>
  ),
};

/* ---------- tree icons ---------- */

const tree = {
  clock: <Svg><circle cx="8" cy="8" r="6.500" fill="#dbe4ef" stroke="#777" strokeWidth="2" /><path d="M8 3v5h4" stroke="#223" strokeWidth="1.500" /></Svg>,
  views: <Svg><path d="M1 4l6-3 6 3v8l-6 3-6-3zM1 4l6 3 6-3M7 1v14M1 12l6-4 6 4" stroke="#1e9a52" strokeWidth="1.200" /><path d="M8 15l7-3" stroke="#e0341c" strokeWidth="1.800" /></Svg>,
  camera: <Svg><path d="M1 5l10-4v10l-9 4z" stroke="#e0341c" strokeWidth="1.500" /><path d="M5 5l6-2 4 4v6l-5 1-5-4z" fill="#5a62a0" stroke="#223" strokeWidth=".8" /><circle cx="8" cy="8" r="2.500" fill="#cfd8f4" stroke="#223" /></Svg>,
  pmi: <Svg><path d="M3 1h11v3H3zM3 3H1v7h3M11 14h3v2h-3z" stroke="#d22" strokeWidth="1.300" /><path d="M5 12V8h3V6h5v7H7v-3z" fill="#fff" stroke="#222" strokeWidth="1.300" /></Svg>,
  folder: <Svg><path d="M1 3h5l1 2h6v3H1z" fill="#e8b83c" stroke="#8a5c0c" /><path d="M1 14V5l3 3h12l-3 7H1z" fill="#ffd659" stroke="#8a5c0c" /></Svg>,
  csys: <Svg><path d="M2 0v5" stroke="#22b" strokeWidth="1.500" /><path d="M2 4l5 3v6L2 10zM7 7l5-3M7 10l6 1-4 3-4-2M7 13l4-3" stroke="#333" /><path d="M12 5l4-2" stroke="#1c9a2a" strokeWidth="1.800" /><path d="M9 14l4 1" stroke="#d22" strokeWidth="1.500" /></Svg>,
  block: <Svg><Cube x={1} y={1} w={14} h={14} c="blue" /></Svg>,
};

const Lines = ({ kind, sign, w = 16 }) => (
  <svg width={w} height="19" viewBox={`0 0 ${w} 19`} fill="none" aria-hidden="true">
    <path
      d={`M6.500 ${kind === "first" ? 9 : 0}V${kind === "last" ? 9 : 19}M7 9.500h${w - 8}`}
      stroke="#999"
      strokeDasharray="1 1"
    />
    {sign && (
      <>
        <path d="M2.500 5.500h8v8h-8z" fill="#fff" stroke="#ccc" />
        <path d={sign === "+" ? "M4 9.500h5M6.500 7v5" : "M4 9.500h5"} stroke="#111" />
      </>
    )}
  </svg>
);

/* ---------- data ---------- */

const tabs = ["主页", "装配", "曲线", "曲面", "分析", "渲染", "视图", "工具", "PMI", "应用模块"];

const annotations = [
  ["note", "注释", 46],
  ["frame", "特征控制框", 62],
  ["datum", "基准特征符号", 74],
  ["target", "基准目标", 54],
  ["rough", "表面粗糙度", 64],
  ["weld", "焊接符号", 52],
  ["balloon", "符号标注", 52],
];

const nodes = [
  { icon: "clock", text: "历史记录模式", kind: "first" },
  { icon: "views", text: "模型视图", kind: "mid", sign: "+" },
  { icon: "camera", text: "摄像机", kind: "mid", sign: "+", ticked: true },
  { icon: "pmi", text: "PMI", kind: "mid", sign: "+" },
  { icon: "folder", text: "模型历史记录", kind: "last", sign: "-" },
  { icon: "csys", text: "基准坐标系 (0)", kind: "mid", level: 1 },
  { icon: "block", text: "块 (1)", kind: "last", level: 1, bold: true },
];

const EMPTY_ROWS = 60;

const snapTools = [
  ["snap", true],
  ["endLine", true],
  ["midLine", true],
  ["curve", false],
  ["spline", true],
  ["cross", false],
  ["circleC", true],
  ["quad", false],
  ["plus", true],
  ["onCurve", true],
  ["surface", false],
  ["grid", false],
];

/* ---------- components ---------- */

const Group = ({ name, pad, children }) => (
  <GroupBox>
    <GroupBody $pad={pad}>{children}</GroupBody>
    {name && (
      <GroupFoot>
        <GroupName>{name}</GroupName>
        <GroupMore aria-label={`${name}选项`}>
          <Caret />
        </GroupMore>
      </GroupFoot>
    )}
  </GroupBox>
);

const Big = ({ icon, w = 44, children }) => (
  <BigButton $w={w}>
    {icons[icon]}
    <span>{children}</span>
  </BigButton>
);

const Small = ({ icon }) => <IconButton aria-label={icon}>{icons[icon]}</IconButton>;

const Text = ({ icon, children }) => (
  <TextButton>
    {icons[icon]}
    {children}
  </TextButton>
);

const Split = ({ icon, w = 24 }) => (
  <>
    <Tool $w={w} aria-label={icon}>{bar[icon]}</Tool>
    <Tool $w={13} aria-label={`${icon} 选项`}><Caret /></Tool>
  </>
);

const TitleRow = () => (
  <TitleBar>
    <QuickAccess>
      <Logo>NX</Logo>
      <QuickSep />
      <QuickButton $w={20} aria-label="保存">{quick.save}</QuickButton>
      <QuickSep />
      <QuickButton aria-label="撤消">{quick.undo}</QuickButton>
      <QuickButton $w={14} aria-label="撤消列表"><Caret /></QuickButton>
      <QuickButton aria-label="重做">{quick.redo}</QuickButton>
      <QuickSep />
      <QuickButton $w={20} aria-label="剪切">{quick.cut}</QuickButton>
      <QuickButton aria-label="复制">{quick.copy}</QuickButton>
      <QuickButton aria-label="粘贴">{quick.paste}</QuickButton>
      <QuickSep />
      <QuickButton $w={20} aria-label="重复命令">{quick.cmd}</QuickButton>
      <QuickButton $w={10} aria-label="命令列表"><Caret /></QuickButton>
      <QuickSep />
      <QuickButton $w={20} aria-label="触控">{quick.touch}</QuickButton>
      <QuickSep />
      <QuickButton $w={55}>
        {quick.win}
        窗口
        <Caret />
      </QuickButton>
      <QuickButton $w={14} aria-label="工具条选项"><Caret /></QuickButton>
    </QuickAccess>
    <WindowTitle>NX 10 - 建模 - [_model2.prt （修改的） ]</WindowTitle>
  </TitleBar>
);

const RibbonBar = () => (
  <Ribbon>
    <Group name="尺寸" pad={7}>
      <Big icon="quick">快速</Big>
      <IconGrid $gap={-2}>
        {["dimLinear", "dimRadial", "dimAngle", "dimChamfer", "dimThick", "dimArc", "dimOrd"].map((i) => (
          <Small key={i} icon={i} />
        ))}
      </IconGrid>
    </Group>
    <Group name="注释" pad={4}>
      {annotations.map(([icon, text, w]) => (
        <Big key={icon} icon={icon} w={w}>{text}</Big>
      ))}
    </Group>
    <Group name="定制符号" pad={5}>
      <Big icon="insert">插入</Big>
      <TextGrid $gap={4}>
        <Text icon="define">定义</Text>
        <Text icon="explode">打散</Text>
        <Text icon="replace">替换</Text>
      </TextGrid>
    </Group>
    <Group name="补充几何信息" pad={6}>
      <Big icon="region">区域</Big>
      <Big icon="centermark" w={52}>中心标记</Big>
      <Big icon="centerline">中心线</Big>
    </Group>
    <Group name="专用" pad={12}>
      <TextGrid>
        <Text icon="coordNote">坐标注释</Text>
        <Text icon="generalNote">一般注释</Text>
        <Text icon="specificNote">特定注释</Text>
      </TextGrid>
      <IconGrid $gap={4}>
        {["treeSmall", "dummy1", "goldBox", "flow", "pageGlobe", "slabNote", "handList", "boxAc", "box12", "box1"].map((i) => (
          <Small key={i} icon={i} />
        ))}
      </IconGrid>
    </Group>
    <Group name="安全标记" pad={12}>
      <TextGrid>
        <Text icon="gov">政府安全信息</Text>
        <Text icon="owner">公司所有权信息</Text>
        <Text icon="exportCtl">导出控制</Text>
      </TextGrid>
    </Group>
    <Group name="截面" pad={6}>
      <Big icon="light">轻量级</Big>
    </Group>
    <Group pad={5}>
      <Big icon="resize" w={54}>调整 PMI<br />大小</Big>
      <Big icon="search" w={54}>PMI 搜索</Big>
      <Big icon="settings" w={52}>编辑设置</Big>
    </Group>
  </Ribbon>
);

const SelectionRow = () => (
  <SelectionBar>
    <MenuButton>
      {bar.menu}
      <span>菜单(<u>M</u>)</span>
      <Caret />
    </MenuButton>
    <BarSep $after={12} />
    <SelectWrap $w={134} $gap={7}>
      <select aria-label="类型过滤器">
        <option>没有选择过滤器</option>
      </select>
      <Caret />
    </SelectWrap>
    <SelectWrap $w={140} $gap={4}>
      <select aria-label="选择范围">
        <option>整个装配</option>
      </select>
      <Caret />
    </SelectWrap>
    <Tool aria-label="g1">{bar.g1}</Tool>
    <Tool aria-label="g2">{bar.g2}</Tool>
    <Split icon="filter" w={22} />
    <Tool aria-label="g3">{bar.g3}</Tool>
    <Tool aria-label="g4">{bar.g4}</Tool>
    <Split icon="rect" w={24} />
    <Tool aria-label="body1">{bar.body1}</Tool>
    <Tool aria-label="cubeBlue">{bar.cubeBlue}</Tool>
    {snapTools.map(([icon, on]) => (
      <Tool key={icon} $on={on} aria-pressed={on} aria-label={icon}>{bar[icon]}</Tool>
    ))}
    <BarSep $before={4} $after={8} />
    <Tool aria-label="zoomFit">{bar.zoomFit}</Tool>
    <Tool aria-label="pan">{bar.pan}</Tool>
    <Tool aria-label="rotate">{bar.rotate}</Tool>
    <Split icon="tiles" />
    <Split icon="orient" />
    <Split icon="cubeSolid" />
    <Split icon="flag" />
    <BarSep $before={4} $after={0} />
  </SelectionBar>
);

const ResourceBar = () => (
  <Rail>
    <RailOptions aria-label="资源条选项">{rail.gear}</RailOptions>
    <RailButton $gap={16} aria-label="装配导航器">{rail.assembly}</RailButton>
    <RailButton aria-label="约束导航器">{rail.mirror}</RailButton>
    <RailActive aria-label="部件导航器">{rail.part}</RailActive>
    <RailButton aria-label="重用库">{rail.books}</RailButton>
    <RailButton $gap={12} aria-label="浏览器">{rail.page}</RailButton>
    <RailButton $gap={12} aria-label="历史记录">{rail.clock}</RailButton>
    <RailButton aria-label="加工向导">{rail.tools}</RailButton>
    <RailButton aria-label="角色">{rail.roles}</RailButton>
  </Rail>
);

const TreeRow = ({ node }) => {
  const [checked, setChecked] = useState(true);
  return (
    <tr>
      <td>
        <Node $level={node.level} $bold={node.bold}>
          <Lines kind={node.kind} sign={node.sign} w={node.level ? 18 : 16} />
          {node.level ? (
            <NodeLabel>
              <CheckBox>
                <input type="checkbox" checked={checked} onChange={() => setChecked(!checked)} />
                {checked && <Check s={10} />}
              </CheckBox>
              {tree[node.icon]}
              <span>{node.text}</span>
            </NodeLabel>
          ) : (
            <>
              {node.ticked && <Ticked><Check /></Ticked>}
              {tree[node.icon]}
              <NodeText>{node.text}</NodeText>
            </>
          )}
        </Node>
      </td>
      <StateCell>{node.level && <Check />}</StateCell>
      <td />
    </tr>
  );
};

const Navigator = () => (
  <Panel>
    <PanelHead>
      <PanelTitle>部件导航器</PanelTitle>
      <MaxButton aria-label="最大化" />
    </PanelHead>
    <TreeBox>
      <TreeScroll>
        <TreeTable>
          <colgroup>
            <col style={{ width: 200 }} />
            <col style={{ width: 100 }} />
            <col />
          </colgroup>
          <thead>
            <tr>
              <th>
                <SortHead>
                  名称
                  <svg width="10" height="5" viewBox="0 0 10 5" aria-hidden="true">
                    <path d="M0 5h10L5 0z" fill="#111" />
                  </svg>
                </SortHead>
              </th>
              <th>最新</th>
              <th>附</th>
            </tr>
          </thead>
          <tbody>
            {nodes.map((n) => (
              <TreeRow key={n.text} node={n} />
            ))}
            {Array.from({ length: EMPTY_ROWS }, (_, i) => (
              <tr key={i}>
                <td />
                <td />
                <td />
              </tr>
            ))}
          </tbody>
        </TreeTable>
      </TreeScroll>
      <ScrollBar>
        <ScrollArrow aria-label="向左">
          <svg width="6" height="8" viewBox="0 0 6 8" fill="none"><path d="M5 1L2 4l3 3" stroke="#444" strokeWidth="1.800" /></svg>
        </ScrollArrow>
        <ScrollTrack><ScrollThumb /></ScrollTrack>
        <ScrollArrow aria-label="向右">
          <svg width="6" height="8" viewBox="0 0 6 8" fill="none"><path d="M1 1l3 3-3 3" stroke="#444" strokeWidth="1.800" /></svg>
        </ScrollArrow>
      </ScrollBar>
    </TreeBox>
    <Splitter />
    <Sections>
      {["相依性", "细节", "预览"].map((s) => (
        <Section key={s}>
          {s}
          <svg width="11" height="9" viewBox="0 0 11 9" fill="none"><path d="M1.500 0l4 7 4-7" stroke="#2d8cc0" strokeWidth="2" /></svg>
        </Section>
      ))}
    </Sections>
  </Panel>
);

const Scene = () => (
  <Viewport>
    <svg viewBox="364 172 1376 979" preserveAspectRatio="xMidYMid meet" fill="none">
      {/* block */}
      <g stroke="#2e2a1c">
        <path d="M680.500 496L984.500 403.500L1231.500 517L928.500 610z" fill="#ffc200" />
        <path d="M680.500 496L928.500 610V973.500L680.500 859.500z" fill="#b36b00" />
        <path d="M928.500 610L1231.500 517V880.500L928.500 973.500z" fill="#d27f00" />
      </g>

      {/* extension lines */}
      <path
        d="M928 610L839 320M1231 517L1144 228M1232 517.500H1591M1232 880.500H1591M1232 880.500L1386 834M928 973.500L1300 1144"
        stroke="#0a6e6a"
        strokeWidth="1.200"
      />

      {/* dimension lines */}
      <g stroke="#14294a">
        <path d="M842 326.500L1145 234M1584.500 518V880" />
        <path d="M1381 835L1398 843L1414 852L1434 864L1456 881L1477 899L1495 921L1504 938L1511 965L1511.500 976L1508 996L1501 1013L1489 1033L1473 1050L1454 1067L1429 1084L1404 1100L1376 1115L1345 1128L1297 1143" />
      </g>
      <g fill="#14294a">
        <path d="M842 326.500l10.500-6 1.500 4.500zM1145 234l-10.500 6-1.500-4.500zM1584.500 518l3 13h-6zM1584.500 880l3-13h-6zM1381 835l9 2-2 4zM1297 1143l10-6 1 4z" />
      </g>
      <g fill="#0000f0" fontFamily="Liberation Sans Narrow, Roboto Condensed, Roboto" fontSize="14" textAnchor="middle">
        <text transform="translate(993 274) rotate(-17)">100</text>
        <text transform="translate(1579 698) rotate(-90)">100</text>
        <text x="1497" y="1001" fontSize="9" fontWeight="700" fontStyle="italic">90°</text>
      </g>

      {/* datum coordinate system */}
      <g stroke="#d8d4cc">
        <path d="M682 797L733.500 781.500V844L775 863.500L724 879M681 859.500L771 832" />
        <path d="M785 828l-14 1.500 1 4.500z" fill="#e4e4e4" />
      </g>
      <g stroke="#0000d8">
        <path d="M680.500 859V740M681 797L723.500 817V879M681 859.500L764 897.500M677 859.500h8M680.500 856v8" />
        <path d="M680.500 738l3 13h-6zM765 898l-9-7-3 4z" fill="#0000d8" />
      </g>
      <g fontFamily="Liberation Sans" fontSize="12" textAnchor="middle">
        <text x="681" y="735" fill="#0000e8">Z</text>
        <text x="769" y="905" fill="#0000e8">X</text>
        <text x="789" y="831" fill="#dedede">Y</text>
      </g>

      {/* view triad */}
      <g stroke="#a8abab" fill="#c4c8c6" fillOpacity=".6">
        <path d="M440 1056L463 1050L482.500 1058.500V1086.500L459 1093L440 1083z" />
        <path d="M440 1056L459 1065.500L482.500 1058.500M459 1065.500V1093M463 1050V1077M440 1083L463 1077L482.500 1086.500" fill="none" />
      </g>
      <path d="M441 1083L472 1075" stroke="#a9c6aa" strokeWidth="3" />
      <path d="M480 1073l-10-2 2 7z" fill="#9dc0a0" />
      <path d="M440 1085L463 1095" stroke="#d02020" strokeWidth="4" />
      <path d="M472 1100l-8-9-4 7z" fill="#d02020" />
      <path d="M439.500 1082V1048" stroke="#0c32c8" strokeWidth="3" />
      <path d="M439.500 1038l4 12h-8z" fill="#0c32c8" />
      <circle cx="439" cy="1085" r="4" fill="#d8d8d8" stroke="#999" />
      <g fontFamily="Liberation Sans" fontSize="12" textAnchor="middle">
        <text x="439" y="1037" fill="#1c4cf0">Z</text>
        <text x="475" y="1106" fill="#e02020">X</text>
        <text x="484" y="1076" fill="#3a9a44">Y</text>
      </g>
    </svg>
    <Watermark>UG爱好者论坛 WWW.UGSNX.COM</Watermark>
  </Viewport>
);

const App = () => {
  const [active, setActive] = useState("PMI");

  return (
    <Page>
      <GlobalStyle />
      <TitleRow />
      <TabBar>
        <FileTab>文件(F)</FileTab>
        {tabs.map((t) => (
          <Tab key={t} $on={t === active} onClick={() => setActive(t)}>{t}</Tab>
        ))}
        <Search type="text" placeholder="查找命令" aria-label="查找命令" />
      </TabBar>
      <RibbonBar />
      <SelectionRow />
      <Body>
        <ResourceBar />
        <Navigator />
        <Scene />
      </Body>
    </Page>
  );
};

export default App;
